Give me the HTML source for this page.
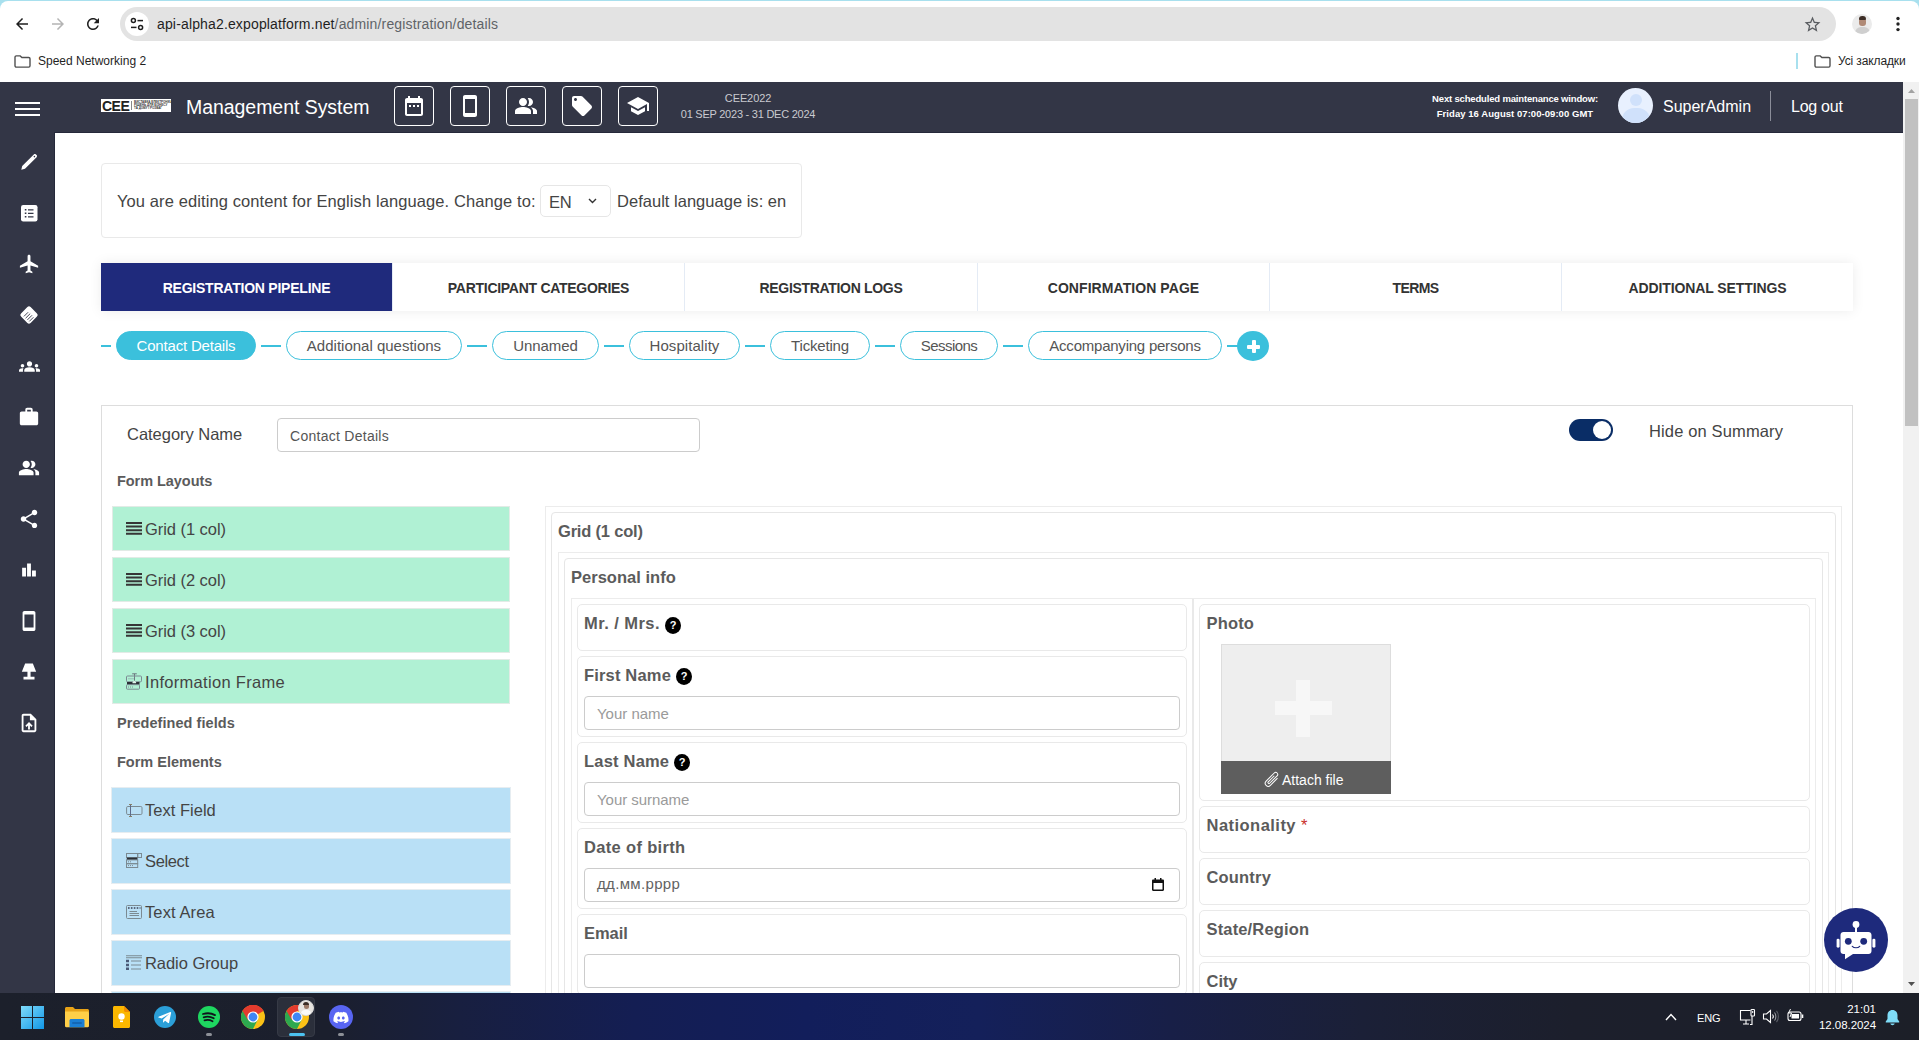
<!DOCTYPE html>
<html lang="en">
<head>
<meta charset="utf-8">
<title>Registration details</title>
<style>
*{box-sizing:border-box;margin:0;padding:0}
html,body{width:1919px;height:1040px;overflow:hidden;background:#fff}
body{position:relative;font-family:"Liberation Sans",sans-serif;color:#444;font-size:16px}
.abs{position:absolute}
.t{position:absolute;white-space:nowrap;line-height:1}
svg{display:block}
/* browser chrome */
#chrome{position:absolute;left:0;top:0;width:1919px;height:82px;background:#a8e0ee}
#chromebody{position:absolute;left:0;top:1px;width:1919px;height:81px;background:#fff;border-radius:8px 8px 0 0}
#addr{position:absolute;left:120px;top:7px;width:1716px;height:34px;border-radius:17px;background:#e3e3e3}
/* app header */
#hdr{position:absolute;left:0;top:82px;width:1903px;height:51px;background:#333646;border-bottom:1px solid #25283a}
.hb{position:absolute;top:4px;width:40px;height:40px;border:1px solid #fff;border-radius:4px}
.hb svg{position:absolute;left:7px;top:7px}
#side{position:absolute;left:0;top:132px;width:55px;height:861px;background:#333646;border-right:1px solid #25283a}
#side svg{position:absolute}
/* scrollbar */
#sb{position:absolute;left:1903px;top:82px;width:16px;height:911px;background:#f1f1f1}
#sbthumb{position:absolute;left:2px;top:17px;width:13px;height:327px;background:#c1c1c1}
/* content */
#lang{position:absolute;left:101px;top:163px;width:701px;height:75px;border:1px solid #e9e9e9;border-radius:4px}
#tabs{position:absolute;left:101px;top:263px;width:1752px;height:48px;box-shadow:0 0 12px rgba(0,0,0,.08);background:#fff}
.tab{position:absolute;top:0;height:48px;width:292px;border-left:1px solid #e4ebf5;text-align:center;line-height:51px;font-weight:bold;font-size:14px;color:#333;white-space:nowrap}
.tab.on{background:#1f2a7c;color:#fff;border-left:0}
.pill{position:absolute;top:331px;height:29px;border:1px solid #3bc0dc;border-radius:15px;text-align:center;font-size:15px;line-height:27.500px;color:#555;white-space:nowrap;background:#fff}
.pill.on{background:#3bc0dc;color:#fff}
.dash{position:absolute;top:345px;height:2px;background:#3bc0dc}
#panel{position:absolute;left:101px;top:405px;width:1752px;height:600px;border:1px solid #ddd}
.gi{position:absolute;left:112px;width:398px;height:45px;background:#b0f1d4;border:1px solid #e2ebe6;font-size:16px;color:#444}
.bi{position:absolute;left:112px;width:398px;height:45px;background:#b9e0f6;box-shadow:0 0 0 1px rgba(200,215,225,.45);font-size:16px;color:#444}
.gi .t,.bi .t{left:33px;top:15px;font-size:17px}
.gi .t{left:32px;top:14px}
.gi svg{margin:-1px 0 0 -1px}
.bi .t{top:14px}
.gi svg,.bi svg{position:absolute;left:14px;top:16px}
.box{position:absolute;border:1px solid #e6e6e6;border-radius:5px;background:#fff}
.lbl{position:absolute;white-space:nowrap;font-weight:bold;font-size:16px;color:#5b5b5b;line-height:1}
.inp{position:absolute;height:34px;border:1px solid #ccc;border-radius:4px;background:#fff;font-size:15px;color:#9a9a9a;line-height:33px;padding-left:12px;padding-top:0;white-space:nowrap}
.q{position:absolute;width:16px;height:17px;border-radius:8px/8.500px;background:#000;color:#fff;font-size:11px;font-weight:bold;text-align:center;line-height:16px}
/* taskbar */
#task{position:absolute;left:0;top:993px;width:1919px;height:47px;background:linear-gradient(90deg,#1c202b 0%,#1b1f2d 17%,#181f40 24%,#141e53 33%,#121e5b 42%,#14205a 51%,#181f47 61%,#1b2037 71%,#1c1f2c 82%,#1c1f28 100%)}
#task .t{color:#fff}
</style>
</head>
<body>
<!-- ================= BROWSER CHROME ================= -->
<div id="chrome">
<div id="chromebody"></div>
<!-- back -->
<svg class="abs" style="left:13px;top:15px" width="18" height="18" viewBox="0 0 24 24"><path d="M20 11H7.83l5.59-5.59L12 4l-8 8 8 8 1.41-1.41L7.83 13H20v-2z" fill="#1f1f1f"/></svg>
<!-- forward -->
<svg class="abs" style="left:49px;top:15px" width="18" height="18" viewBox="0 0 24 24"><path d="M12 4l-1.41 1.41L16.17 11H4v2h12.17l-5.58 5.59L12 20l8-8z" fill="#b4b4b4"/></svg>
<!-- reload -->
<svg class="abs" style="left:84px;top:15px" width="18" height="18" viewBox="0 0 24 24"><path d="M17.65 6.35C16.2 4.9 14.21 4 12 4c-4.42 0-7.99 3.58-7.99 8s3.57 8 7.99 8c3.73 0 6.84-2.55 7.73-6h-2.08c-.82 2.33-3.04 4-5.65 4-3.31 0-6-2.69-6-6s2.690-6 6-6c1.660 0 3.140.69 4.220 1.780L13 11h7V4l-2.350 2.350z" fill="#1f1f1f"/></svg>
<div id="addr">
<div class="abs" style="left:5px;top:5px;width:24px;height:24px;border-radius:12px;background:#fff"></div>
<svg class="abs" style="left:10px;top:10px" width="14" height="14" viewBox="0 0 14 14" fill="none" stroke="#1f1f1f" stroke-width="1.5"><circle cx="3.4" cy="3.6" r="2"/><path d="M7.5 3.6H13"/><circle cx="10.6" cy="10.4" r="2"/><path d="M1 10.4H6.5"/></svg>
<div class="t" style="left:37px;top:10px;font-size:14px;color:#1f1f1f;letter-spacing:0.15px">api-alpha2.expoplatform.net<span style="color:#5f6368">/admin/registration/details</span></div>
</div>
<!-- star -->
<svg class="abs" style="left:1802.500px;top:14.500px" width="19" height="19" viewBox="0 0 24 24"><path d="M22 9.24l-7.190-.62L12 2 9.190 8.630 2 9.240l5.460 4.730L5.820 21 12 17.270 18.180 21l-1.630-7.030L22 9.240zM12 15.400l-3.760 2.270 1-4.280-3.320-2.880 4.380-.38L12 6.100l1.710 4.040 4.380.38-3.320 2.880 1 4.280L12 15.400z" fill="#5a5d61"/></svg>
<!-- profile avatar -->
<div class="abs" style="left:1852px;top:14px;width:20px;height:20px;border-radius:10px;background:#ebebeb;overflow:hidden">
<div class="abs" style="left:7px;top:3.500px;width:6.500px;height:8px;border-radius:3px;background:#b08a76"></div>
<div class="abs" style="left:6.500px;top:2px;width:7.500px;height:4px;border-radius:3.500px 3.500px 1px 1px;background:#3d2d26"></div>
<div class="abs" style="left:2.500px;top:12.500px;width:15px;height:10px;border-radius:6px 6px 0 0;background:#cfcfcf"></div>
</div>
<!-- menu dots -->
<svg class="abs" style="left:1894px;top:14px" width="8" height="20" viewBox="0 0 8 20"><circle cx="4" cy="4.500" r="1.700" fill="#222"/><circle cx="4" cy="10" r="1.700" fill="#222"/><circle cx="4" cy="15.600" r="1.700" fill="#222"/></svg>
<!-- bookmarks -->
<svg class="abs" style="left:13.500px;top:54.500px" width="17" height="13" viewBox="0 0 17 13" fill="none" stroke="#505050" stroke-width="1.400"><path d="M1 2.300C1 1.500 1.600.9 2.300.9h3.900l1.700 1.600h6.800c.7 0 1.300.6 1.300 1.300v7c0 .7-.6 1.300-1.300 1.300H2.300c-.7 0-1.300-.6-1.300-1.300z"/></svg>
<div class="t" style="left:38px;top:55px;font-size:12px;color:#1f1f1f">Speed Networking 2</div>
<div class="abs" style="left:1796px;top:53px;width:2px;height:16px;background:#a8e0ee"></div>
<svg class="abs" style="left:1813.500px;top:54.500px" width="17" height="13" viewBox="0 0 17 13" fill="none" stroke="#505050" stroke-width="1.400"><path d="M1 2.300C1 1.500 1.600.9 2.300.9h3.900l1.700 1.600h6.800c.7 0 1.300.6 1.300 1.300v7c0 .7-.6 1.300-1.300 1.300H2.300c-.7 0-1.300-.6-1.300-1.300z"/></svg>
<div class="t" style="left:1838px;top:55px;font-size:12px;color:#1f1f1f;letter-spacing:-0.12px">Усі закладки</div>
</div>
<!-- ================= APP HEADER ================= -->
<div id="hdr">
<div class="abs" style="left:15px;top:20px;width:25px;height:2px;background:#fff"></div>
<div class="abs" style="left:15px;top:26px;width:25px;height:2px;background:#fff"></div>
<div class="abs" style="left:15px;top:32px;width:25px;height:2px;background:#fff"></div>
<div class="abs" style="left:101px;top:17px;width:70px;height:13px;background:#fff;overflow:hidden">
<div class="t" style="left:1px;top:-0.500px;font-size:14px;font-weight:bold;color:#222;letter-spacing:-0.5px">CEE</div>
<div class="abs" style="left:30px;top:2px;width:1px;height:9px;background:#888"></div>
<div class="t" style="left:33px;top:2px;font-size:3px;line-height:3px;font-weight:bold;color:#333;white-space:pre">ВИСТАВКА ЕЛЕКТРОНІКА,
РІШЕНЬ ДЛЯ БІЗНЕСУ
ТА ДОМУ І РОЗВАГ</div>
</div>
<div class="t" style="letter-spacing:-0.05px;left:186px;top:15.5px;font-size:19.5px;color:#fff" id="ms">Management System</div>
<div class="hb" style="left:394px"><svg width="24" height="24" viewBox="0 0 24 24"><path fill="#fff" d="M9 11H7v2h2v-2zm4 0h-2v2h2v-2zm4 0h-2v2h2v-2zm2-7h-1V2h-2v2H8V2H6v2H5c-1.110 0-1.990.9-1.990 2L3 20c0 1.100.890 2 2 2h14c1.100 0 2-.9 2-2V6c0-1.100-.9-2-2-2zm0 16H5V9h14v11z"/></svg></div>
<div class="hb" style="left:450px"><svg width="24" height="24" viewBox="0 0 24 24"><path fill="#fff" d="M17 1.010L7 1c-1.100 0-1.990.9-1.990 2v18c0 1.100.890 2 1.990 2h10c1.100 0 2-.9 2-2V3c0-1.100-.9-1.990-2-1.990zM17 19H7V5h10v14z"/></svg></div>
<div class="hb" style="left:506px"><svg width="24" height="24" viewBox="0 0 24 24"><path fill="#fff" d="M16.670 13.130C18.040 14.060 19 15.320 19 17v3h4v-3c0-2.180-3.570-3.470-6.330-3.870zM15 12c2.210 0 4-1.790 4-4s-1.790-4-4-4c-.47 0-.91.1-1.330.24C14.500 5.270 15 6.580 15 8s-.5 2.730-1.330 3.760c.42.140.86.240 1.330.240zM9 12c2.210 0 4-1.790 4-4s-1.790-4-4-4-4 1.790-4 4 1.790 4 4 4zM9 13c-2.670 0-8 1.340-8 4v3h16v-3c0-2.660-5.330-4-8-4z"/></svg></div>
<div class="hb" style="left:562px"><svg width="24" height="24" viewBox="0 0 24 24"><path fill="#fff" d="M21.410 11.580l-9-9C12.050 2.220 11.550 2 11 2H4c-1.100 0-2 .9-2 2v7c0 .55.220 1.050.590 1.420l9 9c.36.360.86.580 1.410.580.550 0 1.050-.22 1.410-.59l7-7c.37-.36.590-.86.590-1.410 0-.55-.23-1.060-.59-1.420zM5.500 7C4.670 7 4 6.330 4 5.500S4.670 4 5.500 4 7 4.670 7 5.500 6.330 7 5.500 7z"/></svg></div>
<div class="hb" style="left:618px"><svg width="24" height="24" viewBox="0 0 24 24"><path fill="#fff" d="M5 13.180v4L12 21l7-3.820v-4L12 17l-7-3.820zM12 3L1 9l11 6 9-4.910V17h2V9L12 3z"/></svg></div>
<div class="t" style="left:648px;width:200px;text-align:center;top:10.500px;font-size:11px;color:#c9cad0;letter-spacing:-0.1px">CEE2022</div>
<div class="t" style="left:648px;width:200px;text-align:center;top:27px;font-size:11px;color:#c9cad0;letter-spacing:-0.24px" id="dates">01 SEP 2023 - 31 DEC 2024</div>
<div class="t" style="left:1415px;width:200px;text-align:center;top:12px;font-size:9.5px;color:#fff;letter-spacing:-0.17px;font-weight:bold" id="mw1">Next scheduled maintenance window:</div>
<div class="t" style="left:1415px;width:200px;text-align:center;top:27px;font-size:9.5px;color:#fff;letter-spacing:0.05px;font-weight:bold" id="mw2">Friday 16 August 07:00-09:00 GMT</div>
<div class="abs" style="left:1618px;top:6px;width:35px;height:35px;border-radius:18px;background:#e8f0fe;overflow:hidden">
<div class="abs" style="left:11.5px;top:6px;width:12px;height:12px;border-radius:6px;background:#d0e1fb"></div>
<div class="abs" style="left:3.5px;top:20px;width:28px;height:22px;border-radius:12px 12px 0 0;background:#d0e1fb"></div>
</div>
<div class="t" style="letter-spacing:0.0px;left:1663px;top:17px;font-size:16px;color:#fff" id="sa">SuperAdmin</div>
<div class="abs" style="left:1770px;top:9px;width:1px;height:30px;background:#8b8d99"></div>
<div class="t" style="letter-spacing:-0.26px;left:1791px;top:17px;font-size:16px;color:#fff" id="lo">Log out</div>
</div>
<div id="side">
<svg style="left:19px;top:20px" width="20" height="20" viewBox="0 0 20 20"><path d="M2.300 17.700l.9-3.700L14.800 2.400c.6-.6 1.500-.6 2.100 0l.7.700c.6.600.6 1.500 0 2.100L6 16.800z" fill="#fff"/><circle cx="15.400" cy="4.600" r=".8" fill="#333646"/></svg>
<svg style="left:21px;top:72.500px" width="17" height="17" viewBox="0 0 17 17"><rect x="0" y="0" width="16.500" height="16.500" rx="2.200" fill="#fff"/><path d="M7 4.800h5.500M7 8.300h5.500M7 11.800h5.500" stroke="#333646" stroke-width="1.300"/><path d="M3.800 4.100h1.600v1.400H3.800zM3.800 7.600h1.600V9H3.800zM3.800 11.100h1.600v1.400H3.800z" fill="#333646"/></svg>
<svg style="left:17.500px;top:121px" width="23" height="22" viewBox="0 0 24 24" preserveAspectRatio="none"><path fill="#fff" d="M21 16v-2l-8-5V3.500c0-.830-.670-1.500-1.500-1.500S10 2.670 10 3.500V9l-8 5v2l8-2.500V19l-2 1.500V22l3.500-1 3.500 1v-1.500L13 19v-5.500l8 2.500z"/></svg>
<svg style="left:18px;top:172px" width="22" height="22" viewBox="0 0 24 24"><rect x="4.600" y="4.600" width="14.800" height="14.800" rx="2.500" transform="rotate(45 12 12)" fill="#fff"/><path d="M6.500 13.500l4.500-4.500M8.300 15.500l5-5M10.300 17.300l5-5M12.300 19l4.500-4.500" stroke="#333646" stroke-width="1" fill="none"/></svg>
<svg style="left:18.5px;top:223.5px" width="21" height="21" viewBox="0 0 24 24"><path fill="#fff" d="M12 12.750c1.630 0 3.070.390 4.240.9 1.080.480 1.760 1.560 1.760 2.730V18H6v-1.610c0-1.180.680-2.260 1.760-2.730 1.170-.520 2.610-.910 4.240-.910zM4 13c1.100 0 2-.9 2-2s-.9-2-2-2-2 .9-2 2 .9 2 2 2zm1.130 1.100c-.370-.060-.740-.1-1.130-.1-.990 0-1.930.210-2.780.580C.480 14.900 0 15.620 0 16.430V18h4.500v-1.610c0-.830.230-1.610.630-2.290zM20 13c1.100 0 2-.9 2-2s-.9-2-2-2-2 .9-2 2 .9 2 2 2zm4 3.430c0-.810-.480-1.530-1.220-1.850-.850-.370-1.790-.580-2.780-.580-.390 0-.760.040-1.130.1.400.680.630 1.460.630 2.290V18H24v-1.570zM12 6c1.660 0 3 1.340 3 3s-1.340 3-3 3-3-1.340-3-3 1.340-3 3-3z"/></svg>
<svg style="left:18.0px;top:274.0px" width="22" height="22" viewBox="0 0 24 24"><path fill="#fff" d="M20 6h-4V4c0-1.110-.890-2-2-2h-4c-1.110 0-2 .890-2 2v2H4c-1.110 0-1.990.890-1.990 2L2 19c0 1.110.890 2 2 2h16c1.110 0 2-.890 2-2V8c0-1.110-.890-2-2-2zm-6 0h-4V4h4v2z"/></svg>
<svg style="left:18.0px;top:325.0px" width="22" height="22" viewBox="0 0 24 24"><path fill="#fff" d="M16.670 13.130C18.040 14.060 19 15.320 19 17v3h4v-3c0-2.180-3.570-3.470-6.330-3.870zM15 12c2.210 0 4-1.790 4-4s-1.790-4-4-4c-.47 0-.91.1-1.330.24C14.500 5.270 15 6.580 15 8s-.5 2.730-1.330 3.760c.42.140.86.240 1.330.240zM9 12c2.210 0 4-1.790 4-4s-1.790-4-4-4-4 1.790-4 4 1.790 4 4 4zM9 13c-2.670 0-8 1.340-8 4v3h16v-3c0-2.660-5.330-4-8-4z"/></svg>
<svg style="left:18.0px;top:376.0px" width="22" height="22" viewBox="0 0 24 24"><path fill="#fff" d="M18 16.080c-.760 0-1.440.3-1.960.770L8.910 12.700c.050-.23.090-.46.090-.7s-.04-.47-.09-.7l7.050-4.110c.540.5 1.250.810 2.040.810 1.660 0 3-1.340 3-3s-1.340-3-3-3-3 1.340-3 3c0 .24.040.47.090.7L8.040 9.810C7.500 9.310 6.790 9 6 9c-1.660 0-3 1.340-3 3s1.340 3 3 3c.790 0 1.500-.31 2.040-.81l7.120 4.160c-.05.21-.08.43-.08.65 0 1.610 1.310 2.920 2.920 2.920 1.610 0 2.920-1.310 2.920-2.920s-1.310-2.920-2.920-2.920z"/></svg>
<svg style="left:18.0px;top:427.0px" width="22" height="22" viewBox="0 0 24 24"><path fill="#fff" d="M4.500 9.500h4.200V19H4.500zM9.900 5h4.200v14H9.900zM15.300 12.500h4.200V19h-4.200z"/></svg>
<svg style="left:18.0px;top:478.0px" width="22" height="22" viewBox="0 0 24 24"><path fill="#fff" d="M17 1.010L7 1c-1.100 0-1.990.9-1.990 2v18c0 1.100.890 2 1.990 2h10c1.100 0 2-.9 2-2V3c0-1.100-.9-1.990-2-1.990zM17 19H7V5h10v14z"/></svg>
<svg style="left:18.0px;top:529.0px" width="22" height="22" viewBox="0 0 24 24"><path fill="#fff" d="M7.800 2.800h8.400l3.600 9H4.200z M10.300 11.500h3.400v6h-3.400z M6 17.300h12v2.800H6z"/></svg>
<svg style="left:18.0px;top:580.0px" width="22" height="22" viewBox="0 0 24 24"><path fill="#fff" d="M14 2H6c-1.100 0-1.990.9-1.990 2L4 20c0 1.100.890 2 1.990 2H18c1.100 0 2-.9 2-2V8l-6-6zm4 18H6V4h7v5h5v11zM8 15.010l1.410 1.410L11 14.840V19h2v-4.160l1.590 1.590L16 15.010 12.010 11z"/></svg>
</div>
<div id="sb"><div id="sbthumb"></div>
<svg class="abs" style="left:5px;top:7px" width="7" height="4" viewBox="0 0 7 4"><path d="M0 4L3.500 0 7 4z" fill="#a3a3a3"/></svg>
<svg class="abs" style="left:5px;top:900px" width="7" height="4" viewBox="0 0 7 4"><path d="M0 0L3.500 4 7 0z" fill="#505050"/></svg>
</div>
<!-- ================= CONTENT ================= -->
<div id="lang">
<div class="t" id="l1" style="letter-spacing:0.1px;left:15px;top:29px;font-size:16.5px;color:#444">You are editing content for English language. Change to:</div>
<div class="abs" style="left:438px;top:21px;width:71px;height:32px;border:1px solid #e6e6e6;border-radius:5px"></div>
<div class="t" id="l2" style="letter-spacing:-0.31px;left:447px;top:30px;font-size:16.5px;color:#444">EN</div>
<svg class="abs" style="left:486px;top:34px" width="9" height="6" viewBox="0 0 9 6" fill="none" stroke="#333" stroke-width="1.400"><path d="M1 1l3.500 3.500L8 1"/></svg>
<div class="t" id="l3" style="letter-spacing:0.02px;left:515px;top:29px;font-size:16.5px;color:#444">Default language is: en</div>
</div>
<div id="tabs">
<div class="tab on" style="left:0px;width:291px"><span id="tb0" style="letter-spacing:-0.23px;font-size:14px">REGISTRATION PIPELINE</span></div>
<div class="tab" style="left:291px;width:292px"><span id="tb1" style="letter-spacing:-0.28px;font-size:14px">PARTICIPANT CATEGORIES</span></div>
<div class="tab" style="left:583px;width:293px"><span id="tb2" style="letter-spacing:-0.32px;font-size:14px">REGISTRATION LOGS</span></div>
<div class="tab" style="left:876px;width:292px"><span id="tb3" style="letter-spacing:0.07px;font-size:14px">CONFIRMATION PAGE</span></div>
<div class="tab" style="left:1168px;width:292px"><span id="tb4" style="letter-spacing:-0.56px;font-size:14px">TERMS</span></div>
<div class="tab" style="left:1460px;width:292px"><span id="tb5" style="letter-spacing:-0.1px;font-size:14px">ADDITIONAL SETTINGS</span></div>
</div>
<div class="dash" style="left:101px;width:10px"></div>
<div class="pill on" style="left:116px;width:140px"><span id="pl0" style="letter-spacing:-0.19px">Contact Details</span></div>
<div class="dash" style="left:261px;width:20px"></div>
<div class="pill" style="left:286px;width:176px"><span id="pl1" style="letter-spacing:0.0px">Additional questions</span></div>
<div class="dash" style="left:467px;width:20px"></div>
<div class="pill" style="left:492px;width:107px"><span id="pl2" style="letter-spacing:-0.06px">Unnamed</span></div>
<div class="dash" style="left:604px;width:20px"></div>
<div class="pill" style="left:629px;width:111px"><span id="pl3" style="letter-spacing:0.06px">Hospitality</span></div>
<div class="dash" style="left:745px;width:20px"></div>
<div class="pill" style="left:770px;width:100px"><span id="pl4" style="letter-spacing:-0.17px">Ticketing</span></div>
<div class="dash" style="left:875px;width:20px"></div>
<div class="pill" style="left:900px;width:98px"><span id="pl5" style="letter-spacing:-0.57px">Sessions</span></div>
<div class="dash" style="left:1003px;width:20px"></div>
<div class="pill" style="left:1028px;width:194px"><span id="pl6" style="letter-spacing:-0.23px">Accompanying persons</span></div>
<div class="dash" style="left:1227px;width:12px"></div>
<div class="abs" style="left:1237px;top:331px;width:32px;height:30px;border-radius:50%;background:#3bc0dc"></div>
<div class="abs" style="left:1247px;top:345px;width:13px;height:4px;border-radius:1px;background:#fff"></div>
<div class="abs" style="left:1251.500px;top:340px;width:4.500px;height:13px;border-radius:1px;background:#fff"></div>
<div id="panel">
<div class="t" id="cn" style="letter-spacing:-0.03px;left:25px;top:20px;font-size:16.5px;color:#444">Category Name</div>
<div class="abs" style="left:175px;top:12px;width:423px;height:34px;border:1px solid #ccc;border-radius:4px"><div class="t" id="cd" style="letter-spacing:0.27px;left:12px;top:10px;font-size:14px;color:#555">Contact Details</div></div>
<div class="abs" style="left:1467px;top:13px;width:44px;height:22px;border-radius:11px;background:#0a2d66"><div class="abs" style="left:24px;top:2px;width:18px;height:18px;border-radius:9px;background:#fff"></div></div>
<div class="t" id="hs" style="letter-spacing:0.14px;left:1547px;top:17px;font-size:16.5px;color:#444">Hide on Summary</div>
<div class="lbl" id="fl" style="letter-spacing:-0.05px;left:15px;top:68px;font-size:14.5px">Form Layouts</div>
<div class="gi" style="left:10px;top:100px;height:45px"><svg width="16" height="13" viewBox="0 0 16 13"><path d="M0 0h16v2H0zM0 3.600h16v2H0zM0 7.200h16v2H0zM0 10.800h16v2H0z" fill="#363636"/></svg><div class="t" id="g1" style="font-size:16.5px;letter-spacing:-0.05px">Grid (1 col)</div></div>
<div class="gi" style="left:10px;top:151px;height:45px"><svg width="16" height="13" viewBox="0 0 16 13"><path d="M0 0h16v2H0zM0 3.600h16v2H0zM0 7.200h16v2H0zM0 10.800h16v2H0z" fill="#363636"/></svg><div class="t" id="g2" style="font-size:16.5px;letter-spacing:-0.05px">Grid (2 col)</div></div>
<div class="gi" style="left:10px;top:202px;height:45px"><svg width="16" height="13" viewBox="0 0 16 13"><path d="M0 0h16v2H0zM0 3.600h16v2H0zM0 7.200h16v2H0zM0 10.800h16v2H0z" fill="#363636"/></svg><div class="t" id="g3" style="font-size:16.5px;letter-spacing:-0.05px">Grid (3 col)</div></div>
<div class="gi" style="left:10px;top:253px;height:45px"><svg style="top:14px" width="16" height="17" viewBox="0 0 16 17" fill="none" stroke="#7b8a92" stroke-width="1"><path d="M6.200 .8h4.600M8.500 .8v7" stroke="#6d7a80"/><rect x=".5" y="3" width="15" height="5.800" rx="1"/><path d="M2.500 5.800h5" stroke-dasharray="1 1"/><rect x="1" y="9" width="12.500" height="2.700" fill="#2b2f36" stroke="none"/><path d="M6.500 9l1.800-1.200 1.800 1.200v1.300h-3.600z" fill="#dff5ea" stroke="none"/><rect x=".5" y="11.700" width="13" height="4.500" rx=".8"/><path d="M2 14h6" stroke-dasharray="1 1"/></svg><div class="t" id="g4" style="font-size:16.5px;letter-spacing:0.31px">Information Frame</div></div>
<div class="lbl" id="pf" style="letter-spacing:0.06px;left:15px;top:310px;font-size:14.5px">Predefined fields</div>
<div class="lbl" id="fe" style="letter-spacing:0.0px;left:15px;top:349px;font-size:14.5px">Form Elements</div>
<div class="bi" style="left:10px;top:382px;height:44px"><svg style="top:16px" width="17" height="13" viewBox="0 0 17 13" fill="none" stroke="#7b8a92" stroke-width="1"><rect x=".6" y="2.500" width="15.400" height="8" rx="1.200"/><path d="M4.500 .5v12" stroke="#5d6a8a"/><path d="M3 .5h3M3 12.500h3" stroke="#8a7f62"/></svg><div class="t" id="b1" style="font-size:16.5px;letter-spacing:0.02px">Text Field</div></div>
<div class="bi" style="left:10px;top:433px;height:44px"><svg style="top:14px" width="16" height="15" viewBox="0 0 16 15" fill="none" stroke="#7b8a92" stroke-width="1"><rect x=".5" y=".5" width="11.200" height="4" /><rect x="11.700" y=".5" width="3.800" height="4"/><rect x=".8" y="4.600" width="10.700" height="2.300" fill="#2b2f36" stroke="none"/><rect x=".5" y="6.900" width="11.200" height="3.800"/><rect x=".5" y="10.700" width="11.200" height="3.800"/><path d="M2 8.800h4M2 12.600h6" stroke-dasharray="1 1"/></svg><div class="t" id="b2" style="font-size:16.5px;letter-spacing:-0.36px">Select</div></div>
<div class="bi" style="left:10px;top:484px;height:44px"><svg style="top:15px" width="16" height="14" viewBox="0 0 16 14" fill="none" stroke="#7b8a92" stroke-width="1"><rect x=".5" y=".5" width="15" height="13" rx="1"/><path d="M2 3h12.500" stroke="#3a3f55" stroke-width="1.600" stroke-dasharray="1.600 1.300"/><path d="M3.500 6.500h7.500M3.500 8.500h9.500M3.500 10.500h9.500"/></svg><div class="t" id="b3" style="font-size:16.5px;letter-spacing:0.11px">Text Area</div></div>
<div class="bi" style="left:10px;top:535px;height:44px"><svg style="top:14px" width="16" height="15" viewBox="0 0 16 15" fill="none" stroke="#7b8a92" stroke-width="1"><path d="M0 .8h16M0 2.800h16" stroke-width="1.100"/><path d="M5 6h10M5 10h10M5 14h10"/><path d="M0 4.800h3v2.400H0zM0 8.800h3v2.400H0zM0 12.600h3v2.400H0z" fill="#4a5a78" stroke="none"/></svg><div class="t" id="b4" style="font-size:16.5px;letter-spacing:-0.05px">Radio Group</div></div>
<div class="bi" style="left:10px;top:586px;height:44px"><div class="t" id="b5"></div></div>
<div class="box" style="left:443px;top:100px;width:1297px;height:504px;border-radius:0px;border-color:#ececec;"></div>
<div class="box" style="left:449px;top:106px;width:1285px;height:498px;border-radius:4px;border-color:#e6e6e6;"></div>
<div class="box" style="left:456px;top:146px;width:1271px;height:458px;border-radius:0px;border-color:#ececec;"></div>
<div class="box" style="left:462px;top:152px;width:1259px;height:452px;border-radius:4px;border-color:#e6e6e6;"></div>
<div class="box" style="left:469px;top:192px;width:1245px;height:412px;border-radius:0px;border-color:#ececec;"></div>
<div class="abs" style="left:1090px;top:193px;width:2px;height:420px;background:#e9e9e9"></div>
<div class="lbl" id="r1" style="font-size:16.5px;letter-spacing:-0.2px;left:456px;top:117px">Grid (1 col)</div>
<div class="lbl" id="r2" style="font-size:16.5px;letter-spacing:0.02px;left:469px;top:163px">Personal info</div>
<div class="box" style="left:475px;top:198px;width:610px;height:47px;border-radius:5px;border-color:#e9e9e9;"></div>
<div class="lbl" id="f1" style="font-size:16.5px;letter-spacing:0.45px;left:482px;top:209px">Mr. / Mrs.</div>
<div class="q" style="left:563px;top:211px">?</div>
<div class="box" style="left:475px;top:250px;width:610px;height:81px;border-radius:5px;border-color:#e9e9e9;"></div>
<div class="lbl" id="f2" style="font-size:16.5px;letter-spacing:0.17px;left:482px;top:261px">First Name</div>
<div class="q" style="left:574px;top:262px">?</div>
<div class="inp" style="left:482px;top:290px;width:596px;"><span id="p2" style="letter-spacing:-0.02px">Your name</span></div>
<div class="box" style="left:475px;top:336px;width:610px;height:81px;border-radius:5px;border-color:#e9e9e9;"></div>
<div class="lbl" id="f3" style="font-size:16.5px;letter-spacing:0.2px;left:482px;top:347px">Last Name</div>
<div class="q" style="left:572px;top:348px">?</div>
<div class="inp" style="left:482px;top:376px;width:596px;"><span id="p3" style="letter-spacing:-0.04px">Your surname</span></div>
<div class="box" style="left:475px;top:422px;width:610px;height:81px;border-radius:5px;border-color:#e9e9e9;"></div>
<div class="lbl" id="f4" style="font-size:16.5px;letter-spacing:0.33px;left:482px;top:433px">Date of birth</div>
<div class="inp" style="left:482px;top:462px;width:596px;color:#636363;font-size:15px;line-height:30px;padding-top:0"><span id="p4" style="letter-spacing:0.34px">дд.мм.рррр</span></div>
<div class="box" style="left:475px;top:508px;width:610px;height:81px;border-radius:5px;border-color:#e9e9e9;"></div>
<div class="lbl" id="f5" style="font-size:16.5px;letter-spacing:-0.07px;left:482px;top:519px">Email</div>
<div class="inp" style="left:482px;top:548px;width:596px;"><span id="p5"></span></div>
<svg class="abs" style="left:1050px;top:472px" width="12" height="13" viewBox="0 0 12 13"><path d="M2.500 0v1.500H1.200C.5 1.500 0 2 0 2.700v9.100C0 12.500.5 13 1.200 13h9.600c.7 0 1.200-.5 1.200-1.200V2.700c0-.7-.5-1.200-1.200-1.200H9.500V0H8v1.500H4V0zM1.500 5h9v6.500h-9z" fill="#111" fill-rule="evenodd"/></svg>
<div class="box" style="left:1097px;top:198px;width:611px;height:197px;border-radius:5px;border-color:#e9e9e9;"></div>
<div class="lbl" id="q1" style="font-size:16.5px;letter-spacing:0.17px;left:1104.5px;top:209px">Photo</div>
<div class="abs" style="left:1119px;top:238px;width:170px;height:150px;background:#eee;border:1px solid #ddd"></div>
<div class="abs" style="left:1173px;top:295px;width:57px;height:14px;background:#f7f7f7"></div>
<div class="abs" style="left:1194px;top:274px;width:14px;height:57px;background:#f7f7f7"></div>
<div class="abs" style="left:1119px;top:355px;width:170px;height:33px;background:#5e5e5e"></div>
<svg class="abs" style="left:1161.500px;top:364.500px" width="16" height="17" viewBox="0 0 16 17" fill="none" stroke="#fff" stroke-width="1"><g transform="translate(8,8.500) rotate(45)"><path d="M3-4.800V5.300a3 3 0 0 1-6 0V-6.200a2 2 0 0 1 4 0V4.300a1 1 0 0 1-2 0V-4.300"/></g></svg>
<div class="t" id="af" style="left:1180px;top:366.5px;font-size:14px;color:#fff">Attach file</div>
<div class="box" style="left:1097px;top:400px;width:611px;height:47px;border-radius:5px;border-color:#e9e9e9;"></div>
<div class="lbl" id="q2" style="letter-spacing:0.47px;font-size:16.5px;left:1104.5px;top:411px">Nationality <span style="color:#c9302c;font-weight:normal">*</span></div>
<div class="box" style="left:1097px;top:452px;width:611px;height:47px;border-radius:5px;border-color:#e9e9e9;"></div>
<div class="lbl" id="q3" style="font-size:16.5px;letter-spacing:0.18px;left:1104.5px;top:463px">Country</div>
<div class="box" style="left:1097px;top:504px;width:611px;height:47px;border-radius:5px;border-color:#e9e9e9;"></div>
<div class="lbl" id="q4" style="font-size:16.5px;letter-spacing:0.15px;left:1104.5px;top:515px">State/Region</div>
<div class="box" style="left:1097px;top:556px;width:611px;height:47px;border-radius:5px;border-color:#e9e9e9;"></div>
<div class="lbl" id="q5" style="font-size:16.5px;letter-spacing:-0.04px;left:1104.5px;top:567px">City</div>
</div>
<!-- ================= TASKBAR ================= -->
<div class="abs" style="left:1824px;top:908px;width:64px;height:64px;border-radius:32px;background:#1e2a7c">
<svg width="64" height="64" viewBox="0 0 64 64"><circle cx="32" cy="16.500" r="3.400" fill="#fff"/><rect x="31" y="19" width="2" height="5.500" fill="#fff"/><path d="M19.500 24h25c1.700 0 3 1.300 3 3v16c0 1.700-1.300 3-3 3H29l-8 5.300V46h-1.500c-1.700 0-3-1.300-3-3V27c0-1.700 1.300-3 3-3z" fill="#fff"/><rect x="12.600" y="30.700" width="3" height="9" rx="1.400" fill="#fff"/><rect x="48.400" y="30.700" width="3" height="9" rx="1.400" fill="#fff"/><circle cx="24.300" cy="33.300" r="3.400" fill="#1e2a7c"/><circle cx="39.700" cy="33.300" r="3.400" fill="#1e2a7c"/><path d="M28.300 38.300c1.700 1.900 5.700 1.900 7.400 0" stroke="#1e2a7c" stroke-width="1.200" fill="none" stroke-linecap="round"/></svg>
</div>
<div id="task">
<!-- windows -->
<svg class="abs" style="left:21px;top:13px" width="23" height="23" viewBox="0 0 23 23"><defs><linearGradient id="wg" x1="0" y1="0" x2="1" y2="1"><stop offset="0" stop-color="#7fdcfb"/><stop offset="1" stop-color="#1196e6"/></linearGradient></defs><path d="M0 0h11v11H0zM12 0h11v11H12zM0 12h11v11H0zM12 12h11v11H12z" fill="url(#wg)"/></svg>
<!-- explorer -->
<svg class="abs" style="left:65px;top:13px" width="24" height="22" viewBox="0 0 24 22"><path d="M0 2.500C0 1.700.7 1 1.500 1H8l2 2h12.500c.8 0 1.500.7 1.500 1.500V6H0z" fill="#e8a317"/><path d="M0 5.500h22.800c.7 0 1.200.5 1.200 1.200V20c0 .7-.5 1.200-1.200 1.200H1.200C.5 21.200 0 20.700 0 20z" fill="#ffcf48"/><path d="M4.500 14.500c0-.8.700-1.500 1.500-1.500h12c.8 0 1.500.7 1.500 1.500v6.700h-15z" fill="#1b7fd4"/><rect x="7" y="16" width="10" height="2" rx="1" fill="#1467b4"/></svg>
<!-- keep -->
<svg class="abs" style="left:113px;top:13px" width="17" height="22" viewBox="0 0 17 22"><path d="M0 1.500C0 .7.700 0 1.500 0H11l6 6v14.500c0 .8-.7 1.500-1.500 1.500h-14C.7 22 0 21.300 0 20.500z" fill="#fbb700"/><path d="M11 0l6 6h-4.500C11.700 6 11 5.300 11 4.500z" fill="#f08c00"/><circle cx="8.500" cy="10.500" r="3.200" fill="#fff"/><rect x="7" y="14.500" width="3" height="1.600" fill="#fff"/></svg>
<!-- telegram -->
<svg class="abs" style="left:154px;top:13px" width="22" height="22" viewBox="0 0 22 22"><circle cx="11" cy="11" r="11" fill="#2b9fd8"/><path d="M4.500 10.800l11.800-4.700c.5-.2 1 .1.800.9l-2 9.500c-.1.600-.5.800-1 .5l-3-2.300-1.500 1.500c-.2.200-.3.300-.6.300l.2-3.100 5.600-5.100c.2-.2 0-.3-.3-.1l-6.900 4.400-3-1c-.6-.2-.6-.6.100-.9z" fill="#fff"/></svg>
<!-- spotify -->
<svg class="abs" style="left:198px;top:13px" width="22" height="22" viewBox="0 0 22 22"><circle cx="11" cy="11" r="11" fill="#1ed760"/><path d="M5 8c4-1.200 8.500-.9 12 1.100M5.700 11.300c3.300-1 7-.7 10 1M6.500 14.300c2.700-.7 5.500-.5 8 .9" stroke="#10141c" stroke-width="1.800" fill="none" stroke-linecap="round"/></svg>
<div class="abs" style="left:206px;top:40px;width:6px;height:3px;border-radius:2px;background:#8d9097"></div>
<!-- chrome -->
<svg class="abs" style="left:241px;top:12px" width="24" height="24" viewBox="0 0 24 24"><circle cx="12" cy="12" r="12" fill="#fbc116"/><path d="M12 12L1.600 6A12 12 0 0 1 22.400 6z" fill="#e33b2e"/><path d="M12 12L1.600 6A12 12 0 0 0 12 24L17 14z" fill="#2da94f"/><path d="M12 6h10.400A12 12 0 0 0 1.600 6L6.800 15z" fill="#e33b2e"/><circle cx="12" cy="12" r="5.600" fill="#fff"/><circle cx="12" cy="12" r="4.400" fill="#3f86f4"/></svg>
<!-- chrome active -->
<div class="abs" style="left:277px;top:4px;width:38px;height:40px;border-radius:4px;background:#2b2f3b;border:1px solid #363a46"></div>
<svg class="abs" style="left:285px;top:12px" width="24" height="24" viewBox="0 0 24 24"><circle cx="12" cy="12" r="12" fill="#fbc116"/><path d="M12 12L1.600 6A12 12 0 0 0 12 24L17 14z" fill="#2da94f"/><path d="M12 6h10.400A12 12 0 0 0 1.600 6L6.800 15z" fill="#e33b2e"/><circle cx="12" cy="12" r="5.600" fill="#fff"/><circle cx="12" cy="12" r="4.400" fill="#3f86f4"/></svg>
<div class="abs" style="left:298px;top:7px;width:16px;height:16px;border-radius:8px;background:#e6e3df;overflow:hidden;border:1px solid #d9d9d9">
<div class="abs" style="left:4.500px;top:2px;width:5px;height:6px;border-radius:3px;background:#9a7866"></div>
<div class="abs" style="left:4px;top:1px;width:6px;height:3px;border-radius:3px 3px 0 0;background:#3a2c26"></div>
<div class="abs" style="left:2px;top:9px;width:10px;height:8px;border-radius:4px 4px 0 0;background:#fafafa"></div>
</div>
<div class="abs" style="left:289px;top:40px;width:16px;height:3px;border-radius:2px;background:#4cc2f1"></div>
<!-- discord -->
<svg class="abs" style="left:329px;top:12px" width="24" height="24" viewBox="0 0 24 24"><circle cx="12" cy="12" r="12" fill="#5865f2"/><path d="M17.300 7.700c-1-.5-2-.8-3.100-1l-.4.800c-1.200-.2-2.400-.2-3.600 0l-.4-.8c-1.100.2-2.100.5-3.100 1-2 2.900-2.500 5.800-2.200 8.600 1.300 1 2.600 1.500 3.800 1.900l.8-1.300c-.5-.2-.9-.4-1.300-.6l.3-.2c2.500 1.100 5.200 1.100 7.700 0l.3.200c-.4.300-.900.500-1.300.6l.8 1.300c1.300-.4 2.500-1 3.800-1.900.4-3.300-.6-6.100-2.100-8.600zM9.700 14.600c-.8 0-1.400-.7-1.400-1.500s.6-1.500 1.400-1.500 1.400.7 1.400 1.500-.6 1.500-1.400 1.500zm4.600 0c-.8 0-1.400-.7-1.400-1.500s.6-1.500 1.400-1.500 1.400.7 1.400 1.500-.6 1.500-1.400 1.500z" fill="#fff"/></svg>
<div class="abs" style="left:338px;top:40px;width:6px;height:3px;border-radius:2px;background:#8d9097"></div>
<!-- tray -->
<svg class="abs" style="left:1665px;top:20px" width="12" height="8" viewBox="0 0 12 8" fill="none" stroke="#fff" stroke-width="1.400"><path d="M1 7l5-5.500L11 7"/></svg>
<div class="t" id="eng" style="letter-spacing:-0.15px;left:1697px;top:20px;font-size:11px">ENG</div>
<svg class="abs" style="left:1739px;top:15px" width="17" height="18" viewBox="0 0 17 18" fill="none" stroke="#fff" stroke-width="1.100"><path d="M11.500 2.500H1.500v9.500h10M4 16h6M7 12v4M13 8v8.500H11"/><rect x="12" y="1.500" width="3.500" height="6.500" rx=".8"/><path d="M13.700 3v2" /></svg>
<svg class="abs" style="left:1762px;top:16px" width="18" height="15" viewBox="0 0 18 15" fill="none" stroke="#fff" stroke-width="1.100"><path d="M1.500 5h3l4-3.500v12L4.500 10h-3z"/><path d="M10.500 5.500c.8 1 .8 3 0 4" /><path d="M12.500 3.500c1.800 2 1.800 6 0 8" stroke="#9a9ca2"/><path d="M14.500 1.800c2.500 3 2.500 8.400 0 11.400" stroke="#5a5d66"/></svg>
<svg class="abs" style="left:1786px;top:15px" width="19" height="14" viewBox="0 0 19 14" fill="none" stroke="#fff" stroke-width="1.100"><rect x="2" y="4" width="13" height="8.500" rx="2"/><path d="M16.500 6.500v3.500" stroke-width="1.600"/><path d="M4.500 1L2.500 5h3L4 9" stroke-width="1"/><rect x="5.500" y="6" width="7.500" height="4.500" fill="#fff" stroke="none"/></svg>
<div class="t" id="tm" style="letter-spacing:0.0px;left:1776px;width:100px;text-align:right;top:11px;font-size:11.5px">21:01</div>
<div class="t" id="dt" style="letter-spacing:-0.06px;left:1776px;width:100px;text-align:right;top:27px;font-size:11.5px">12.08.2024</div>
<svg class="abs" style="left:1885px;top:17px" width="15" height="16" viewBox="0 0 15 16"><path d="M7.500 0C4.500 0 2.500 2.300 2.500 5.200V9L.8 11.500c-.3.500 0 1 .5 1h12.400c.5 0 .8-.5.500-1L12.500 9V5.200C12.500 2.300 10.500 0 7.500 0zM5.300 13.500c.3 1 1.200 1.700 2.200 1.700s1.900-.7 2.200-1.700z" fill="#7fdcf7"/></svg>
</div>
</body>
</html>
